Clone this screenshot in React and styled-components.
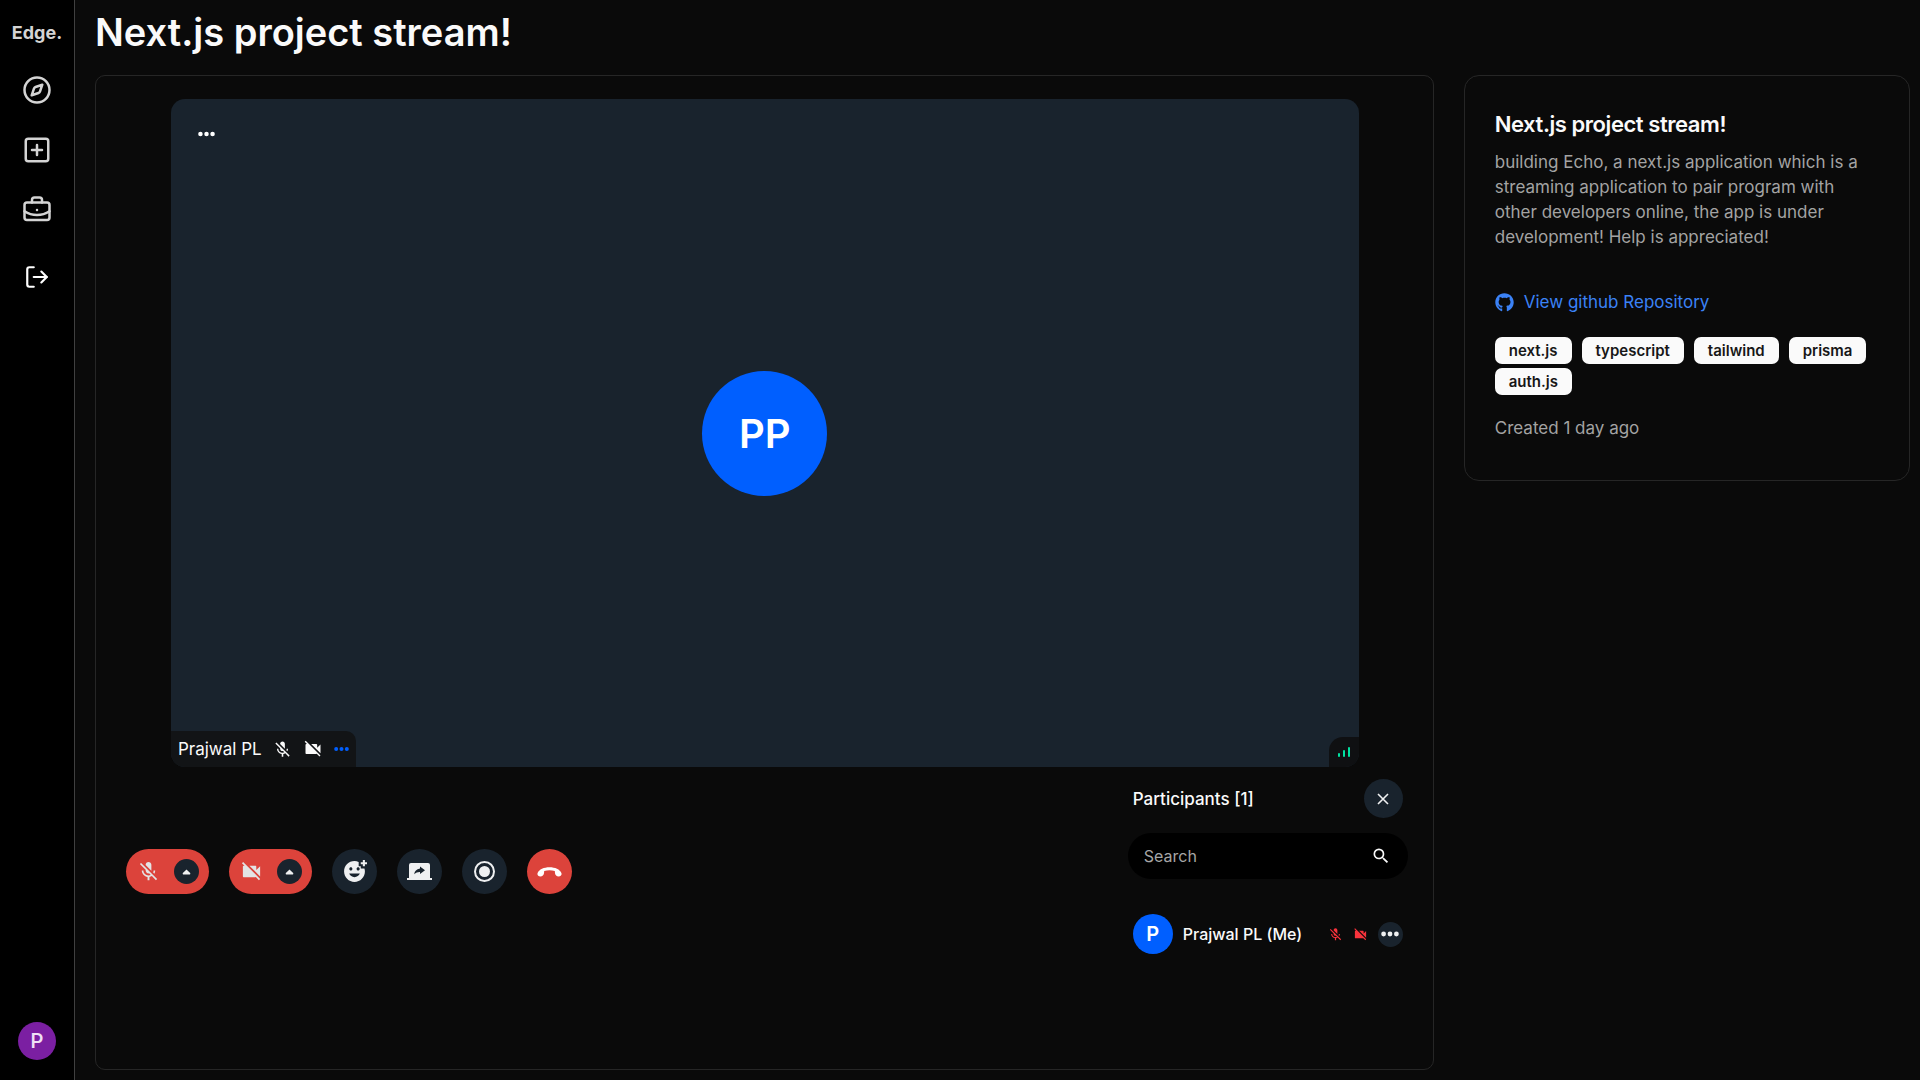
import React from "react";
import styled, { createGlobalStyle } from "styled-components";
import { Compass, SquarePlus, BriefcaseBusiness, LogOut } from "lucide-react";
import { FaGithub } from "react-icons/fa";
import { MdMicOff, MdVideocamOff, MdAddReaction, MdSearch } from "react-icons/md";

const GlobalStyle = createGlobalStyle`
  *, *::before, *::after { box-sizing: border-box; }
  body {
    margin: 0;
    background: #0a0a0a;
    color: #fafafa;
    font-family: Inter, "Liberation Sans", sans-serif;
    font-size: 17px;
    line-height: 25px;
  }
  h1, h2, p, ul { margin: 0; padding: 0; }
  ul { list-style: none; }
  button, input { font: inherit; }
  button { border: 0; padding: 0; cursor: pointer; }
  svg { display: block; flex: none; }
`;

const Page = styled.div`
  display: flex;
  min-height: 100vh;
`;

const Sidebar = styled.aside`
  display: flex;
  flex-direction: column;
  align-items: center;
  flex: none;
  width: 75px;
  padding: 20px 0;
  background: #000;
  border-right: 1px solid #404040;
`;

const Brand = styled.a`
  color: #d4d4d4;
  font-size: 18px;
  line-height: 26px;
  font-weight: 700;
  text-decoration: none;
`;

const Nav = styled.nav`
  display: flex;
  flex-direction: column;
  align-items: center;
  gap: 30px;
  margin-top: 29px;
`;

const NavLink = styled.a`
  color: #d4d4d4;
`;

const LogoutButton = styled.button`
  margin-top: 39px;
  background: none;
  color: #fff;
`;

const UserButton = styled.button`
  width: 38px;
  height: 38px;
  margin-top: auto;
  border-radius: 50%;
  background: #7b1fa2;
  color: #f0e0f5;
  font-family: Roboto, sans-serif;
  font-size: 20px;
  font-weight: 500;
`;

const Main = styled.main`
  display: flex;
  flex-direction: column;
  flex: 1;
  min-width: 0;
  padding: 10px 10px 10px 20px;
`;

const PageTitle = styled.h1`
  font-size: 38px;
  line-height: 45px;
  font-weight: 600;
`;

const Columns = styled.div`
  display: grid;
  grid-template-columns: 3fr 1fr;
  gap: 30px;
  flex: 1;
  margin-top: 20px;
`;

const CallPanel = styled.section`
  display: flex;
  flex-direction: column;
  align-items: center;
  padding: 23px 24px 23px 25px;
  border: 1px solid #262626;
  border-radius: 10px;
`;

const VideoTile = styled.div`
  position: relative;
  display: flex;
  align-items: center;
  justify-content: center;
  width: min(100%, 110vh);
  aspect-ratio: 16 / 9;
  border-radius: 14px;
  background: #19232d;
  overflow: hidden;
`;

const TileMenu = styled.button`
  position: absolute;
  top: 25px;
  left: 25px;
  padding: 7px 2px;
  background: none;
  color: #fff;
`;

const Avatar = styled.div`
  display: flex;
  align-items: center;
  justify-content: center;
  flex: none;
  width: ${(p) => p.$size}px;
  height: ${(p) => p.$size}px;
  border-radius: 50%;
  background: #005fff;
  color: #fff;
  font-size: ${(p) => p.$font}px;
  font-weight: 600;
`;

const NameTag = styled.div`
  position: absolute;
  left: 0;
  bottom: 0;
  display: flex;
  align-items: center;
  height: 36px;
  padding: 0 7px;
  gap: 11px;
  border-top-right-radius: 10px;
  background: #121416;
`;

const TagDots = styled.span`
  color: #005fff;
`;

const SignalBadge = styled.div`
  position: absolute;
  right: 0;
  bottom: 0;
  display: flex;
  align-items: center;
  justify-content: center;
  width: 30px;
  height: 30px;
  border-top-left-radius: 14px;
  background: #0f1012;
`;

const CallFooter = styled.div`
  display: flex;
  align-items: center;
  justify-content: space-between;
  align-self: stretch;
  padding: 0 1px 0 5px;
`;

const Controls = styled.div`
  display: flex;
  gap: 20px;
`;

const TogglePill = styled.div`
  display: flex;
  align-items: center;
  gap: 14px;
  height: 45px;
  padding: 0 10px 0 11px;
  border-radius: 23px;
  background: #dc433b;
`;

const PillIconButton = styled.button`
  background: none;
  color: #e3e4e5;
`;

const RoundButton = styled.button`
  display: flex;
  align-items: center;
  justify-content: center;
  flex: none;
  width: ${(p) => p.$size}px;
  height: ${(p) => p.$size}px;
  border-radius: 50%;
  background: ${(p) => (p.$danger ? "#dc433b" : "#19232d")};
  color: ${(p) => (p.$danger ? "#fff" : "#eff0f1")};
`;

const Participants = styled.section`
  display: flex;
  flex-direction: column;
  width: 280px;
  padding: 12px 0 22px;
`;

const ParticipantsHeader = styled.header`
  display: flex;
  align-items: center;
  justify-content: space-between;
  padding: 0 5px;
`;

const ParticipantsTitle = styled.h2`
  font-size: 17px;
  line-height: 26px;
  font-weight: 500;
`;

const SearchBox = styled.label`
  display: flex;
  align-items: center;
  height: 46px;
  margin-top: 15px;
  padding: 0 17px 0 16px;
  border-radius: 23px;
  background: #000;
`;

const SearchInput = styled.input`
  flex: 1;
  min-width: 0;
  padding: 0;
  border: 0;
  outline: 0;
  background: none;
  color: #fafafa;
  font-size: 16px;
  &::placeholder { color: #a6a6a6; opacity: 1; }
`;

const ParticipantRow = styled.li`
  display: flex;
  align-items: center;
  gap: 10px;
  margin-top: 35px;
  padding: 0 5px;
`;

const ParticipantName = styled.span`
  flex: 1;
  font-size: 16px;
  font-weight: 500;
  white-space: nowrap;
`;

const MutedIcons = styled.span`
  display: flex;
  gap: 10px;
  color: #f8333c;
`;

const InfoCard = styled.aside`
  align-self: start;
  padding: 34px 30px 39px;
  border: 1px solid #262626;
  border-radius: 15px;
`;

const CardTitle = styled.h2`
  font-size: 22px;
  line-height: 28px;
  font-weight: 600;
  letter-spacing: -0.02em;
`;

const Muted = styled.p`
  color: #a3a3a3;
`;

const Description = styled(Muted)`
  margin-top: 12px;
`;

const RepoLink = styled.a`
  display: flex;
  align-items: center;
  gap: 10px;
  margin-top: 40px;
  color: #3b82f6;
  text-decoration: none;
`;

const Tags = styled.ul`
  display: flex;
  flex-wrap: wrap;
  gap: 4px 10px;
  margin: 22px 0 21px;
`;

const Tag = styled.li`
  padding: 1px 14px;
  border-radius: 7px;
  background: #fafafa;
  color: #171717;
  font-size: 15px;
  font-weight: 600;
`;

const Dots = ({ width }) => (
  <svg width={width} height="6" viewBox="0 0 18 6" fill="currentColor" aria-hidden="true">
    <circle cx="2.6" cy="3" r="2.4" />
    <circle cx="9" cy="3" r="2.4" />
    <circle cx="15.4" cy="3" r="2.4" />
  </svg>
);

const Caret = () => (
  <svg width="9" height="6" viewBox="0 0 9 6" fill="currentColor" aria-hidden="true">
    <path d="M4.5 0.4 8.2 4Q8.6 5.4 7.8 5.5H1.2Q.4 5.4.8 4Z" />
  </svg>
);

const Signal = () => (
  <svg width="12" height="10" viewBox="0 0 12 10" fill="#00e2a1" aria-hidden="true">
    <rect x="0" y="6" width="2" height="4" rx="1" />
    <rect x="5" y="3" width="2" height="7" rx="1" />
    <rect x="10" y="0" width="2" height="10" rx="1" />
  </svg>
);

const ShareIcon = () => (
  <svg width="25" height="17" viewBox="0 0 25 17" fill="currentColor" aria-hidden="true">
    <path
      fillRule="evenodd"
      d="M4 0H21Q23 0 23 2V15H25V17H0V15H2V2Q2 0 4 0ZM7.2 11.2C9 9.4 10.8 8.8 13 8.9V11L18 7.2 13 3.6V5.6C9.4 6 7.6 8.4 7.2 11.2Z"
    />
  </svg>
);

const RecordIcon = () => (
  <svg width="21" height="21" viewBox="0 0 21 21" aria-hidden="true">
    <circle cx="10.5" cy="10.5" r="9.5" fill="none" stroke="currentColor" strokeWidth="2" />
    <circle cx="10.5" cy="10.5" r="5.5" fill="currentColor" />
  </svg>
);

const HangUpIcon = () => (
  <svg width="25" height="10" viewBox="0 0 25 10" fill="currentColor" aria-hidden="true">
    <path d="M.5 6.2C2 2.4 7 .3 12.5.3S23 2.4 24.5 6.2C25 8 23.6 9.5 21.6 9.6 19.6 9.2 18.2 8 18 6.2L17.8 4.1C14.5 3 10.5 3 7.2 4.1L7 6.2C6.8 8 5.4 9.2 3.4 9.6 1.4 9.5 0 8 .5 6.2Z" />
  </svg>
);

const CloseIcon = () => (
  <svg width="12" height="12" viewBox="0 0 12 12" stroke="currentColor" strokeWidth="1.6" aria-hidden="true">
    <path d="M1 1 11 11M11 1 1 11" />
  </svg>
);

const NAV = [
  { label: "Discover", icon: Compass },
  { label: "Create", icon: SquarePlus },
  { label: "Projects", icon: BriefcaseBusiness },
];

const TAGS = ["next.js", "typescript", "tailwind", "prisma", "auth.js"];

export default function App() {
  return (
    <>
      <GlobalStyle />
      <Page>
        <Sidebar>
          <Brand href="#">Edge.</Brand>
          <Nav>
            {NAV.map(({ label, icon: Icon }) => (
              <NavLink key={label} href="#" aria-label={label}>
                <Icon size={30} />
              </NavLink>
            ))}
          </Nav>
          <LogoutButton aria-label="Log out">
            <LogOut size={26} />
          </LogoutButton>
          <UserButton>P</UserButton>
        </Sidebar>

        <Main>
          <PageTitle>Next.js project stream!</PageTitle>
          <Columns>
            <CallPanel>
              <VideoTile>
                <TileMenu aria-label="Tile options">
                  <Dots width={17} />
                </TileMenu>
                <Avatar $size={125} $font={40}>PP</Avatar>
                <NameTag>
                  <span>Prajwal PL</span>
                  <MdMicOff size={19} />
                  <MdVideocamOff size={20} />
                  <TagDots>
                    <Dots width={15} />
                  </TagDots>
                </NameTag>
                <SignalBadge>
                  <Signal />
                </SignalBadge>
              </VideoTile>

              <CallFooter>
                <Controls>
                  <TogglePill>
                    <PillIconButton aria-label="Unmute microphone">
                      <MdMicOff size={23} />
                    </PillIconButton>
                    <RoundButton $size={25} aria-label="Microphone options">
                      <Caret />
                    </RoundButton>
                  </TogglePill>
                  <TogglePill>
                    <PillIconButton aria-label="Turn camera on">
                      <MdVideocamOff size={23} />
                    </PillIconButton>
                    <RoundButton $size={25} aria-label="Camera options">
                      <Caret />
                    </RoundButton>
                  </TogglePill>
                  <RoundButton $size={45} aria-label="Reactions">
                    <MdAddReaction size={25} />
                  </RoundButton>
                  <RoundButton $size={45} aria-label="Share screen">
                    <ShareIcon />
                  </RoundButton>
                  <RoundButton $size={45} aria-label="Record call">
                    <RecordIcon />
                  </RoundButton>
                  <RoundButton $size={45} $danger aria-label="Leave call">
                    <HangUpIcon />
                  </RoundButton>
                </Controls>

                <Participants>
                  <ParticipantsHeader>
                    <ParticipantsTitle>Participants [1]</ParticipantsTitle>
                    <RoundButton $size={39} aria-label="Close participants">
                      <CloseIcon />
                    </RoundButton>
                  </ParticipantsHeader>
                  <SearchBox>
                    <SearchInput type="text" placeholder="Search" aria-label="Search" />
                    <MdSearch size={20} />
                  </SearchBox>
                  <ul>
                    <ParticipantRow>
                      <Avatar $size={40} $font={20}>P</Avatar>
                      <ParticipantName>Prajwal PL (Me)</ParticipantName>
                      <MutedIcons>
                        <MdMicOff size={15} />
                        <MdVideocamOff size={15} />
                      </MutedIcons>
                      <RoundButton $size={25} aria-label="Participant options">
                        <Dots width={18} />
                      </RoundButton>
                    </ParticipantRow>
                  </ul>
                </Participants>
              </CallFooter>
            </CallPanel>

            <InfoCard>
              <CardTitle>Next.js project stream!</CardTitle>
              <Description>
                building Echo, a next.js application which is a streaming application to pair
                program with other developers online, the app is under development! Help is
                appreciated!
              </Description>
              <RepoLink href="#">
                <FaGithub size={19} />
                View github Repository
              </RepoLink>
              <Tags>
                {TAGS.map((tag) => (
                  <Tag key={tag}>{tag}</Tag>
                ))}
              </Tags>
              <Muted>Created 1 day ago</Muted>
            </InfoCard>
          </Columns>
        </Main>
      </Page>
    </>
  );
}
